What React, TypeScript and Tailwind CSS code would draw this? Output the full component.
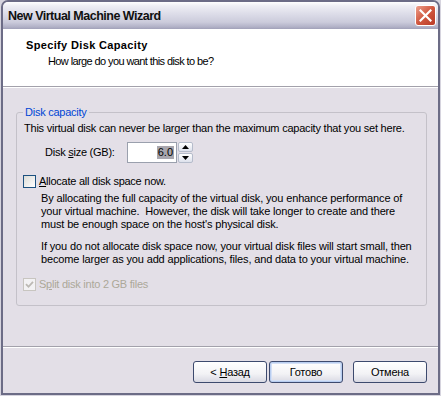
import React from "react";

function Check({ disabled, checked }: { disabled?: boolean; checked?: boolean }) {
  if (disabled) {
    return (
      <span className="w-[13px] h-[13px] shrink-0 border border-[#c8c5c0] bg-[#f3f2f4] flex items-center justify-center">
        {checked && (
          <svg width="9" height="9" viewBox="0 0 9 9">
            <path d="M1 4.2 L3.5 6.8 L8 1.8" stroke="#bcb9b4" strokeWidth="1.8" fill="none" />
          </svg>
        )}
      </span>
    );
  }
  return (
    <span className="w-[13px] h-[13px] shrink-0 border border-[#1c5180] bg-[linear-gradient(135deg,#dcdcd7,#ffffff)]" />
  );
}

function Btn({ children, def }: { children: React.ReactNode; def?: boolean }) {
  return (
    <div
      className={
        def
          ? "w-[74px] h-[22px] rounded-[3px] border border-[#3d4a6e] bg-[linear-gradient(to_bottom,#ffffff,#f2f2f5_60%,#d9d9e3)] shadow-[inset_0_0_0_1px_#b8cdf0,inset_0_0_0_2px_#d4e0f6] flex items-center justify-center"
          : "w-[74px] h-[22px] rounded-[3px] border border-[#3d4a6e] bg-[linear-gradient(to_bottom,#ffffff,#f2f2f5_60%,#d9d9e3)] flex items-center justify-center"
      }
    >
      {children}
    </div>
  );
}

export default function App() {
  return (
    <div className="w-[441px] h-[396px] bg-[#d6d4de] px-px pb-px font-['Liberation_Sans',Arial,sans-serif] text-[11px] leading-[13px] tracking-[-0.25px] text-black">
      <div className="h-full flex flex-col border-2 border-[#6c6c86] rounded-t-[7px] overflow-hidden">
        {/* title bar */}
        <div className="h-[27px] shrink-0 flex items-center justify-between pl-[5px] pr-[2px] bg-[linear-gradient(to_bottom,#ffffff_0%,#eeeef4_15%,#dcdce8_45%,#cbcbdb_75%,#b2b2c7_92%,#a0a0b8_100%)]">
          <span className="text-[12.5px] leading-[16px] font-bold tracking-[-0.5px] text-[#101010]">
            New Virtual Machine Wizard
          </span>
          <div className="w-[21px] h-[21px] rounded-[3px] border border-white bg-[linear-gradient(135deg,#eda08c,#d0573f_50%,#b93a26)] flex items-center justify-center">
            <svg width="13" height="13" viewBox="0 0 13 13">
              <path d="M1.5 1.5 L11.5 11.5 M11.5 1.5 L1.5 11.5" stroke="#ffffff" strokeWidth="2.2" strokeLinecap="square" />
            </svg>
          </div>
        </div>

        <div className="flex-1 flex flex-col bg-[#e3dfe7]">
          {/* header */}
          <div className="h-[58px] shrink-0 bg-white pl-[23px] pt-[10px] border-b border-[#a3a1ab]">
            <div className="font-bold tracking-[0.35px]">Specify Disk Capacity</div>
            <div className="mt-[3px] pl-[22px] tracking-[-0.6px]">How large do you want this disk to be?</div>
          </div>
          <div className="h-px bg-white shrink-0" />

          {/* group box */}
          <div className="mt-[18px] pl-[13px] pr-[11px]">
            <fieldset className="border border-[#c4c1c9] rounded-[3px]">
              <legend className="ml-[6px] px-[2px] text-[#0046d5]">Disk capacity</legend>
              <div className="pl-[6px] pt-[3px] pb-[14px] flex flex-col">
                <div className="ml-px whitespace-nowrap tracking-[-0.22px]">
                  This virtual disk can never be larger than the maximum capacity that you set here.
                </div>
                <div className="mt-[7px] h-[21px] flex items-center">
                  <span className="ml-[22px] w-[82px]">
                    Disk <span className="underline">s</span>ize (GB):
                  </span>
                  <div className="w-[50px] h-[21px] border border-[#9aa0ad] bg-white flex items-center justify-end pr-[2px]">
                    <span className="bg-[#a8a6ae] px-px tracking-normal">6.0</span>
                  </div>
                  <div className="ml-px h-[21px] w-[15px] flex flex-col gap-px">
                    <div className="flex-1 rounded-[2px] border border-[#b5bccb] bg-[linear-gradient(to_bottom,#ffffff,#dde1ec)] flex items-center justify-center">
                      <svg width="7" height="4" viewBox="0 0 7 4">
                        <path d="M0 4 L3.5 0 L7 4 Z" fill="#000" />
                      </svg>
                    </div>
                    <div className="flex-1 rounded-[2px] border border-[#b5bccb] bg-[linear-gradient(to_bottom,#ffffff,#dde1ec)] flex items-center justify-center">
                      <svg width="7" height="4" viewBox="0 0 7 4">
                        <path d="M0 0 L3.5 4 L7 0 Z" fill="#000" />
                      </svg>
                    </div>
                  </div>
                </div>
                <div className="mt-[12px] flex items-center">
                  <Check />
                  <span className="ml-[3px]">
                    <span className="underline">A</span>llocate all disk space now.
                  </span>
                </div>
                <div className="mt-[4px] ml-[18px] whitespace-pre tracking-[-0.15px]">
                  By allocating the full capacity of the virtual disk, you enhance performance of
                  <br />
                  your virtual machine.  However, the disk will take longer to create and there
                  <br />
                  must be enough space on the host's physical disk.
                </div>
                <div className="mt-[9px] ml-[18px] whitespace-pre tracking-[-0.15px]">
                  If you do not allocate disk space now, your virtual disk files will start small, then
                  <br />
                  become larger as you add applications, files, and data to your virtual machine.
                </div>
                <div className="mt-[12px] flex items-center text-[#aca899]">
                  <Check disabled checked />
                  <span className="ml-[3px]">
                    S<span className="underline">p</span>lit disk into 2 GB files
                  </span>
                </div>
              </div>
            </fieldset>
          </div>

          <div className="flex-1" />

          {/* footer */}
          <div className="shrink-0 border-t border-[#a3a1ab]">
            <div className="h-px bg-white" />
            <div className="pt-[13px] pb-[10px] pr-[11px] flex justify-end">
              <Btn>
                &lt; <span className="underline ml-[3px]">Н</span>азад
              </Btn>
              <div className="ml-[2px]">
                <Btn def>Готово</Btn>
              </div>
              <div className="ml-[10px]">
                <Btn>Отмена</Btn>
              </div>
            </div>
          </div>
        </div>
      </div>
    </div>
  );
}
